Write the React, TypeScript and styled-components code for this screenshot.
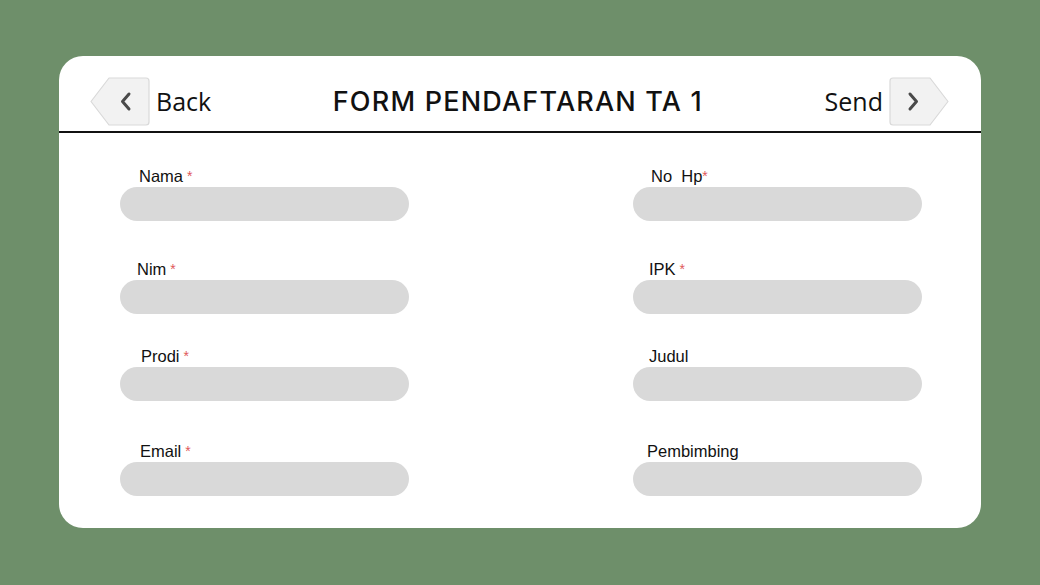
import React from 'react';
import styled, { createGlobalStyle } from 'styled-components';

const GlobalStyle = createGlobalStyle`
	html, body {
		margin: 0;
		padding: 0;
		background: #6e8f6a;
	}
	* {
		box-sizing: border-box;
	}
`;

type FieldDef = { label: string; required?: boolean; indent: number; tight?: boolean };

const rows: { gap: number; left: FieldDef; right: FieldDef }[] = [
	{
		gap: 35,
		left: { label: 'Nama', required: true, indent: 19 },
		right: { label: 'No  Hp', required: true, indent: 18, tight: true },
	},
	{
		gap: 40,
		left: { label: 'Nim', required: true, indent: 17 },
		right: { label: 'IPK', required: true, indent: 16 },
	},
	{
		gap: 34,
		left: { label: 'Prodi', required: true, indent: 21 },
		right: { label: 'Judul', indent: 16 },
	},
	{
		gap: 42,
		left: { label: 'Email', required: true, indent: 20 },
		right: { label: 'Pembimbing', indent: 14 },
	},
];

const NavArrow = ({ dir }: { dir: 'left' | 'right' }) => (
	<svg width='60' height='49' viewBox='0 0 60 49'>
		<g transform={dir === 'right' ? 'translate(60 0) scale(-1 1)' : undefined}>
			<path
				d='M19 1 H56 Q59 1 59 4 V45 Q59 48 56 48 H19 L1 24.5 Z'
				fill='#f2f2f2'
				stroke='#d9d9d9'
				strokeWidth='1.2'
				strokeLinejoin='round'
			/>
			<path
				d='M39 17 L32.5 24.5 L39 32'
				fill='none'
				stroke='#4a4a4a'
				strokeWidth='3'
				strokeLinecap='round'
				strokeLinejoin='round'
			/>
		</g>
	</svg>
);

const Field = ({ label, required, indent, tight }: FieldDef) => (
	<FieldBox>
		<Label indent={indent}>
			{label}
			{required && <Star tight={tight}>*</Star>}
		</Label>
		<Input />
	</FieldBox>
);

export default function App() {
	return (
		<>
			<GlobalStyle />
			<Page>
				<Card>
					<Header>
						<NavButton>
							<NavArrow dir='left' />
							<NavText>Back</NavText>
						</NavButton>
						<Title>FORM PENDAFTARAN TA 1</Title>
						<NavButton>
							<NavText>Send</NavText>
							<NavArrow dir='right' />
						</NavButton>
					</Header>
					<Form>
						{rows.map(row => (
							<Row key={row.left.label} gap={row.gap}>
								<Field {...row.left} />
								<Field {...row.right} />
							</Row>
						))}
					</Form>
				</Card>
			</Page>
		</>
	);
}

const Page = styled.div`
	width: 1040px;
	height: 585px;
	padding: 56px 59px 57px 59px;
	display: flex;
`;

const Card = styled.div`
	flex: 1;
	background: #ffffff;
	border-radius: 24px;
	overflow: hidden;
	display: flex;
	flex-direction: column;
`;

const Header = styled.div`
	height: 77px;
	padding: 21px 32px 0 31px;
	border-bottom: 2px solid #111111;
	display: flex;
	align-items: flex-start;
	justify-content: space-between;
`;

const NavButton = styled.div`
	display: flex;
	align-items: center;
	gap: 6px;
	cursor: pointer;
`;

const NavText = styled.span`
	font-family: 'Open Sans', sans-serif;
	font-size: 25px;
	color: #111111;
	line-height: 49px;
`;

const Title = styled.h1`
	margin: 0;
	font-family: 'Inter', sans-serif;
	font-weight: 500;
	font-size: 27px;
	letter-spacing: 1.2px;
	line-height: 49px;
	color: #111111;
`;

const Form = styled.div`
	display: flex;
	flex-direction: column;
	padding: 0 59px 0 61px;
`;

const Row = styled.div<{ gap: number }>`
	display: grid;
	grid-template-columns: 289px 289px;
	justify-content: space-between;
	margin-top: ${p => p.gap}px;
`;

const FieldBox = styled.div`
	display: flex;
	flex-direction: column;
	gap: 3px;
`;

const Label = styled.label<{ indent: number }>`
	padding-left: ${p => p.indent}px;
	font-family: 'Liberation Sans', Arial, sans-serif;
	font-size: 16.5px;
	line-height: 16px;
	color: #111111;
	white-space: pre;
`;

const Star = styled.span<{ tight?: boolean }>`
	margin-left: ${p => (p.tight ? 0 : 4)}px;
	color: #e0585a;
	font-size: 14px;
	vertical-align: top;
`;

const Input = styled.div`
	height: 34px;
	border-radius: 17px;
	background: #d9d9d9;
`;
